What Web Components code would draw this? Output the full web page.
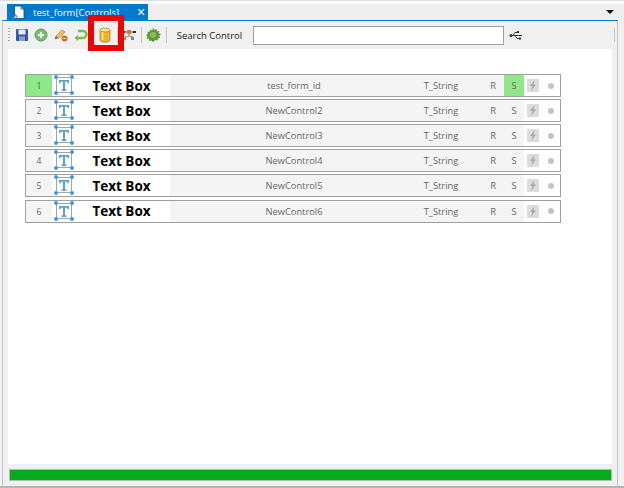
<!DOCTYPE html>
<html><head><meta charset="utf-8"><style>
html,body{margin:0;padding:0;background:#f0f0f0}
body{width:624px;height:488px;overflow:hidden;font-family:"Open Sans","Liberation Sans",sans-serif}
</style></head><body>
<ide-window>
  <control-row n="1" name="test_form_id" first></control-row>
  <control-row n="2" name="NewControl2"></control-row>
  <control-row n="3" name="NewControl3"></control-row>
  <control-row n="4" name="NewControl4"></control-row>
  <control-row n="5" name="NewControl5"></control-row>
  <control-row n="6" name="NewControl6"></control-row>
</ide-window>
<script>
class IdeWindow extends HTMLElement{constructor(){super();this.attachShadow({mode:'open'}).innerHTML=`
<style>
:host{display:flex;flex-direction:column;width:624px;height:488px;position:relative;box-sizing:border-box;border-bottom:2px solid #b4b4b4;background:#f0f0f0}
.top{height:4px;background:#fff;border-top:1px solid #e0e0e0;box-sizing:border-box}
.tabbar{height:16px;display:flex;justify-content:space-between;align-items:center;padding-left:7px;padding-right:10px;background:#efefef}
.tab{width:141px;height:16px;background:#007acc;color:#fff;font:9.500px "Open Sans","Liberation Sans",sans-serif;display:flex;align-items:center;box-sizing:border-box;padding-left:5px;white-space:nowrap}
.tab span{margin-left:6px}
.tab b{font:400 14px/16px "Liberation Sans",sans-serif;margin-left:18px}
.menu{width:0;height:0;border:4px solid transparent;border-top:4px solid #111;border-bottom:0}
.frame{flex:1;display:flex;flex-direction:column;border-top:1px solid #0a7bcb;border-left:1px solid #c4c4c4;border-right:1px solid #c4c4c4;margin:0 6px 0 2px;padding:0 5px 0 5px;min-height:0}
.tools{height:28px;flex:none;display:flex;align-items:center;font:9.500px "Open Sans","Liberation Sans",sans-serif;color:#222}
.grip{width:2px;height:14px;margin-right:3px;background:repeating-linear-gradient(#aaa 0 1px,transparent 1px 3px)}
.btn{width:18px;height:18px;display:flex;align-items:center;justify-content:center;flex:none;margin-right:1.400px}
.sep{width:1px;height:16px;background:#c4c4c4;margin:0 2px;flex:none}
.label{margin:0 10px 0 8px;width:66px;white-space:nowrap}
.search{width:251px;height:19px;border:1px solid #a0a0a0;background:#fff;box-sizing:border-box;flex:none}
.edge{width:1px;height:14px;background:#c8c8c8;margin-left:auto;margin-right:-3px;flex:none}
.content{flex:1;background:#fff;padding:25.100px 0 0 17px;min-height:0}
.list{width:536px;display:flex;flex-direction:column;gap:2.100px}
.foot{height:22px;flex:none;display:flex;align-items:center;margin-left:1px}
.bar{flex:1;height:12px;background:#06ab20;border:1px solid #a8c0ac;box-sizing:border-box}
.mark{position:absolute;left:88px;top:15px;width:36px;height:36px;border:6px solid #f00000;box-sizing:border-box;z-index:2}
</style>
<div class="top"></div>
<div class="tabbar">
 <div class="tab"><svg width="15" height="15" viewBox="0 0 15 15"><path d="M2.500 1h6.500l3 3v9.500H2.500z" fill="#fff" stroke="#14406e" stroke-width=".8"/><path d="M9 1v3h3" fill="none" stroke="#14406e" stroke-width=".8"/><path d="M1 14l2.500-4 2 2.500" fill="none" stroke="#4aa0e0" stroke-width="1.400"/></svg><span>test_form[Controls]</span><b>×</b></div>
 <div class="menu"></div>
</div>
<div class="frame">
 <div class="tools">
  <div class="grip"></div>
  <div class="btn"><svg width="14" height="14" viewBox="0 0 14 14"><rect x="1" y="1" width="12" height="12" rx="1" fill="#3557a8"/><rect x="3.500" y="1.500" width="7" height="5" fill="#e6ecf8"/><rect x="4" y="8.500" width="6" height="4.500" fill="#8d9fc8"/></svg></div>
  <div class="btn"><svg width="14" height="14" viewBox="0 0 14 14"><circle cx="7" cy="7" r="6" fill="#79bd72" stroke="#5a9c58"/><path d="M4 7h6M7 4v6" stroke="#fff" stroke-width="2"/></svg></div>
  <div class="btn"><svg width="16" height="16" viewBox="0 0 16 16"><path d="M2 12l1-3 6-6 3 2-6 6z" fill="#efc060" stroke="#c88a30" stroke-width=".8"/><path d="M2 12l1-3 2 2z" fill="#666"/><circle cx="11.500" cy="11.500" r="3" fill="#e0602c"/><path d="M10 11.500h3" stroke="#fff"/></svg></div>
  <div class="btn"><svg width="15" height="14" viewBox="0 0 15 14"><path d="M5 3h5a2.500 2.500 0 0 1 0 7H3" fill="none" stroke="#7cc040" stroke-width="2.400"/><path d="M5 7l-3.500 3L5 13z" fill="#7cc040"/></svg></div>
  <div class="sep"></div>
  <div class="btn"><svg width="12" height="16" viewBox="0 0 12 16"><path d="M1 3v10c0 3 10 3 10 0V3z" fill="#eab52c" stroke="#b8861e" stroke-width=".8"/><ellipse cx="6" cy="3" rx="5" ry="2" fill="#f8e48c" stroke="#b8861e" stroke-width=".8"/><rect x="2.500" y="5" width="2" height="8" fill="#f8dc70"/></svg></div>
  <div class="sep"></div>
  <div class="btn"><svg width="14" height="12" viewBox="0 0 14 12"><path d="M0 3h14" stroke="#555"/><rect x="5" y="1" width="4" height="4" fill="#e0702c"/><rect x="0" y="2" width="3" height="2" fill="#333"/><rect x="11" y="2" width="3" height="2" fill="#333"/><rect x="1" y="8" width="3" height="3" fill="#9a8a6a"/><rect x="9" y="8" width="3" height="3" fill="#7a8a9a"/><path d="M7 5v2M3 8l4-1 4 1" fill="none" stroke="#888"/></svg></div>
  <div class="sep"></div>
  <div class="btn"><svg width="16" height="16" viewBox="0 0 16 16"><path d="M8 1l1.500 2 2-1 .5 2.200 2.200-.2-.4 2.300 2 1-1.600 1.700 1 2-2.200.4-.3 2.200-2.200-.5L8 15l-1.700-1.600-2.200.7-.4-2.300-2.200-.4.900-2.100L1 8l1.900-1.100-.6-2.200 2.300.1.500-2.200 2 .9z" fill="#5c9a3c"/><circle cx="8" cy="8" r="3" fill="#86bc5c"/></svg></div>
  <div class="sep"></div>
  <div class="label">Search Control</div>
  <div class="search"></div>
  <div class="btn" style="margin-left:3px"><svg width="14" height="9" viewBox="0 0 14 9"><path d="M1 4.500h12M4 4.500l2-3h2M6 4.500l2 3h2" fill="none" stroke="#333"/><rect x="8" y="0" width="2" height="2" fill="#333"/><rect x="10" y="6.500" width="2" height="2" fill="#333"/><circle cx="2" cy="4.500" r="1.500" fill="#333"/></svg></div>
  <div class="edge"></div>
 </div>
 <div class="content"><div class="list"><slot></slot></div></div>
 <div class="foot"><div class="bar"></div></div>
</div>
<div class="mark"></div>`}}
customElements.define('ide-window',IdeWindow);
class ControlRow extends HTMLElement{constructor(){super();this.attachShadow({mode:'open'})}
connectedCallback(){const f=this.hasAttribute('first');this.shadowRoot.innerHTML=`
<style>
:host{display:flex;height:23px;box-sizing:border-box;border:1px solid #a0a0a0;background:#f4f4f4;font:9.300px "Open Sans","Liberation Sans",sans-serif;color:#666}
div{display:flex;align-items:center;justify-content:center;flex:none;height:100%}
.n{width:26px;background:${f?'#90e78a':'#f4f4f4'};color:${f?'#3c7a3c':'#666'};font-size:8.500px}
.ic{width:24px;background:#fff;justify-content:flex-start}
.title{width:94px;padding-right:3px;box-sizing:border-box;background:#fff;font:700 13.500px "Open Sans","Liberation Sans",sans-serif;color:#000}
.name{width:248px}
.type{width:46px;margin-right:18px}
.r{width:22px}.s{width:20px;background:${f?'#90e78a':'transparent'}}
.end{flex:1;background:#fff;justify-content:flex-start;gap:9px;padding-left:3px}
.bolt{width:12px;height:13px;background:#dcdcdc;flex:none}
.dot{width:6px;height:6px;border-radius:50%;background:#c4c4c4;flex:none}
svg{display:block}
</style>
<div class="n">${this.getAttribute('n')}</div>
<div class="ic"><svg width="24" height="21" viewBox="0 0 24 21" style="overflow:visible"><rect x="4.500" y="2.500" width="15" height="15" fill="#fff" stroke="#9aa8b4"/><path d="M7 5h10v3.200h-1.300l-.5-1.400h-2.200v7.400l1.500.4V16H9.500v-1.400l1.500-.4V6.800H8.800l-.5 1.400H7z" fill="#5aa5c8"/><g fill="#3f98e0"><circle cx="4" cy="2" r="2"/><circle cx="20" cy="2" r="2"/><circle cx="4" cy="18" r="2"/><circle cx="20" cy="18" r="2"/></g></svg></div>
<div class="title">Text Box</div>
<div class="name">${this.getAttribute('name')}</div>
<div class="type">T_String</div>
<div class="r">R</div><div class="s">S</div>
<div class="end"><div class="bolt"><svg width="8" height="11" viewBox="0 0 8 11"><path d="M5.500 0L1 6h2.500L2 11 7 4.500H4.500z" fill="#a8a8a8"/></svg></div><div class="dot"></div></div>`}}
customElements.define('control-row',ControlRow);
</script></body></html>
